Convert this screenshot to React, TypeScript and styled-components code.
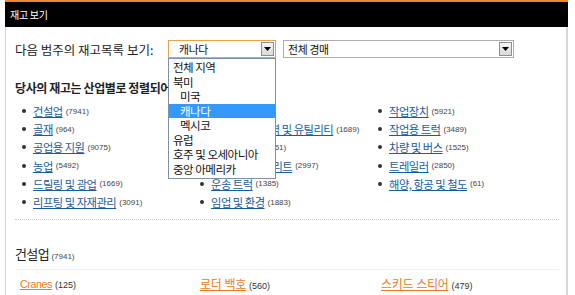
import styled, { createGlobalStyle } from "styled-components";

const GlobalStyle = createGlobalStyle`
  html, body {
    margin: 0;
    padding: 0;
    background: #ffffff;
    overflow: hidden;
  }
  body {
    font-family: "Noto Sans CJK KR", "Liberation Sans", sans-serif;
    color: #222;
  }
`;

type Entry = { name: string; count: number };

const columns: Entry[][] = [
  [
    { name: "건설업", count: 7941 },
    { name: "골재", count: 964 },
    { name: "공업용 지원", count: 9075 },
    { name: "농업", count: 5492 },
    { name: "드릴링 및 광업", count: 1669 },
    { name: "리프팅 및 자재관리", count: 3091 },
  ],
  [
    { name: "부동산", count: 84 },
    { name: "석유, 가스, 전력 및 유틸리티", count: 1689 },
    { name: "선박 및 항만", count: 751 },
    { name: "레디믹스 콘크리트", count: 2997 },
    { name: "운송 트럭", count: 1385 },
    { name: "임업 및 환경", count: 1883 },
  ],
  [
    { name: "작업장치", count: 5921 },
    { name: "작업용 트럭", count: 3489 },
    { name: "차량 및 버스", count: 1525 },
    { name: "트레일러", count: 2850 },
    { name: "해양, 항공 및 철도", count: 61 },
  ],
];

const regions = [
  { label: "전체 지역", sub: false },
  { label: "북미", sub: false },
  { label: "미국", sub: true },
  { label: "캐나다", sub: true, active: true },
  { label: "멕시코", sub: true },
  { label: "유럽", sub: false },
  { label: "호주 및 오세아니아", sub: false },
  { label: "중앙 아메리카", sub: false },
];

const subRows: (Entry | null)[][] = [
  [
    { name: "Cranes", count: 125 },
    { name: "로더 백호", count: 560 },
    { name: "스키드 스티어", count: 479 },
  ],
  [null, { name: "모터 그레이더", count: 212 }, { name: "휠 로더", count: 310 }],
];

const isLatin = (s: string) => /^[A-Za-z]/.test(s);

function Arrow() {
  return (
    <ArrowButton>
      <svg width="7" height="4" viewBox="0 0 7 4">
        <path d="M0 0 L7 0 L3.5 4 Z" fill="#000" />
      </svg>
    </ArrowButton>
  );
}

export default function App() {
  return (
    <>
      <GlobalStyle />
      <Panel>
        <Header>재고 보기</Header>
        <Body>
          <FilterRow>
            <FilterLabel>다음 범주의 재고목록 보기:</FilterLabel>
            <SelectBox $width={108} $focused>
              <SelectText $indent={10}>캐나다</SelectText>
              <Arrow />
              <DropList>
                {regions.map((r) => (
                  <DropItem key={r.label} $sub={r.sub} $active={!!r.active}>
                    {r.label}
                  </DropItem>
                ))}
              </DropList>
            </SelectBox>
            <SelectBox $width={231}>
              <SelectText $indent={4}>전체 경매</SelectText>
              <Arrow />
            </SelectBox>
          </FilterRow>

          <SectionTitle>당사의 재고는 산업별로 정렬되어 있습니다:</SectionTitle>

          <IndustryGrid>
            {columns.map((col, i) => (
              <IndustryColumn key={i}>
                {col.map((e) => (
                  <IndustryItem key={e.name}>
                    <Bullet />
                    <IndustryLink>{e.name}</IndustryLink>
                    <Count>({e.count})</Count>
                  </IndustryItem>
                ))}
              </IndustryColumn>
            ))}
          </IndustryGrid>

          <DottedRule />

          <CategoryTitle>
            건설업 <Count>(7941)</Count>
          </CategoryTitle>
          <FaintRule />

          <SubList>
            {subRows.map((row, i) => (
              <SubRow key={i}>
                {row.map((e, j) => (
                  <SubCell key={j}>
                    {e && (
                      <>
                        <SubLink $latin={isLatin(e.name)}>{e.name}</SubLink>
                        <SubCount>({e.count})</SubCount>
                      </>
                    )}
                  </SubCell>
                ))}
              </SubRow>
            ))}
          </SubList>
        </Body>
      </Panel>
    </>
  );
}

const Panel = styled.div`
  margin-left: 5px;
  width: 563px;
  border-top: 2px solid #f0862a;
`;

const Header = styled.div`
  background: #000;
  color: #fff;
  height: 25px;
  line-height: 25px;
  padding-left: 5px;
  font-size: 10px;
  letter-spacing: -0.3px;
`;

const Body = styled.div`
  border-left: 1px solid #d4d4d4;
  border-right: 2px solid #d8d8d8;
  padding: 13px 7px 0 9px;
  height: 300px;
`;

const FilterRow = styled.div`
  display: flex;
  align-items: center;
  height: 18px;
`;

const FilterLabel = styled.div`
  width: 153px;
  font-size: 12.5px;
  letter-spacing: 0;
  color: #222;
  white-space: nowrap;
`;

const SelectBox = styled.div<{ $width: number; $focused?: boolean }>`
  position: relative;
  box-sizing: border-box;
  width: ${(p) => p.$width}px;
  height: 18px;
  margin-right: 7px;
  border: 1px solid ${(p) => (p.$focused ? "#e6a540" : "#a9aeb3")};
  background: #fff;
  display: flex;
  align-items: center;
  justify-content: space-between;
  padding-right: 1px;
`;

const SelectText = styled.span<{ $indent: number }>`
  padding-left: ${(p) => p.$indent}px;
  font-size: 10.8px;
  letter-spacing: -0.3px;
  color: #111;
`;

const ArrowButton = styled.span`
  box-sizing: border-box;
  width: 13px;
  height: 14px;
  border: 1px solid #8e8f8f;
  background: linear-gradient(#f6f6f6, #d9d9d9);
  display: flex;
  align-items: center;
  justify-content: center;
`;

const DropList = styled.div`
  position: absolute;
  top: 17px;
  left: -1px;
  width: 108px;
  box-sizing: border-box;
  border: 1px solid #7f8fa6;
  background: #fff;
  padding: 1px 0 2px;
  z-index: 5;
`;

const DropItem = styled.div<{ $sub: boolean; $active: boolean }>`
  height: 14.5px;
  line-height: 14.5px;
  padding-left: ${(p) => (p.$sub ? 11 : 4)}px;
  font-size: 11.5px;
  letter-spacing: -0.5px;
  color: ${(p) => (p.$active ? "#fff" : "#111")};
  background: ${(p) => (p.$active ? "#3399ff" : "transparent")};
  white-space: nowrap;
`;

const SectionTitle = styled.div`
  margin-top: 23px;
  font-size: 12px;
  font-weight: bold;
  letter-spacing: -0.4px;
  line-height: 14px;
  color: #222;
`;

const IndustryGrid = styled.div`
  display: grid;
  grid-template-columns: 178px 178px 1fr;
  margin-top: 7px;
`;

const IndustryColumn = styled.div`
  display: flex;
  flex-direction: column;
`;

const IndustryItem = styled.div`
  display: flex;
  align-items: center;
  height: 18.2px;
  padding-left: 7px;
  white-space: nowrap;
`;

const Bullet = styled.span`
  width: 4px;
  height: 4px;
  border-radius: 50%;
  background: #333;
  margin-right: 7px;
`;

const IndustryLink = styled.a`
  font-size: 11.3px;
  letter-spacing: -0.5px;
  color: #1b5c9e;
  text-decoration: underline;
  margin-right: 3px;
`;

const Count = styled.span`
  font-family: "Liberation Sans", sans-serif;
  font-size: 8px;
  color: #444;
  letter-spacing: 0;
  font-weight: normal;
`;

const DottedRule = styled.div`
  margin-top: 8px;
  border-top: 1px dotted #c8c8c8;
  width: 544px;
`;

const CategoryTitle = styled.div`
  margin-top: 25px;
  font-size: 13px;
  letter-spacing: -0.6px;
  line-height: 18px;
  color: #222;
`;

const FaintRule = styled.div`
  margin-top: 3px;
  border-top: 1px solid #efefef;
  width: 544px;
`;

const SubList = styled.div`
  margin-top: 5px;
  padding-left: 5px;
`;

const SubRow = styled.div`
  display: grid;
  grid-template-columns: 180px 181px 1fr;
  height: 17px;
  align-items: center;
`;

const SubCell = styled.div`
  white-space: nowrap;
  display: flex;
  align-items: baseline;
`;

const SubLink = styled.a<{ $latin: boolean }>`
  font-family: "Liberation Sans", "Noto Sans CJK KR", sans-serif;
  font-size: ${(p) => (p.$latin ? 10.5 : 12)}px;
  letter-spacing: -0.3px;
  color: #ec7a1c;
  text-decoration: underline;
  margin-right: 3px;
`;

const SubCount = styled.span`
  font-family: "Liberation Sans", sans-serif;
  font-size: 9px;
  color: #333;
`;
